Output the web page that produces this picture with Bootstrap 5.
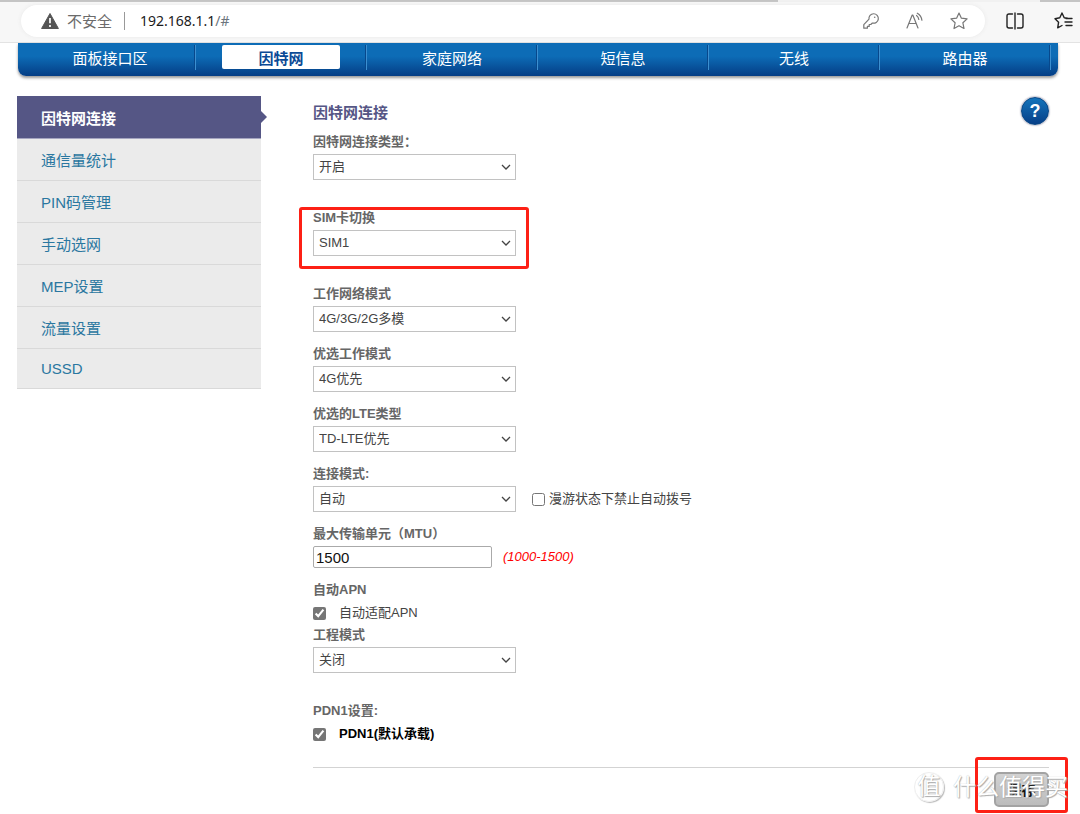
<!DOCTYPE html>
<html lang="zh-CN">
<head>
<meta charset="utf-8">
<meta name="viewport" content="width=device-width, initial-scale=1">
<title>因特网连接</title>
<link href="https://cdn.jsdelivr.net/npm/bootstrap@5.3.0/dist/css/bootstrap.min.css" rel="stylesheet">
<style>
  body { font-family: "Liberation Sans", "Noto Sans CJK SC", sans-serif; font-size: 13px; line-height: 20px; color: #444; background: #fff; }

  /* browser toolbar */
  .toolbar { height: 41px; background: #f7f7f7; border-bottom: 1px solid #e3e3e3; padding: 3px 7px 0 21px; }
  .tab-edge { height: 2px; background: #f1f1f1; }
  .tab-edge i { background: #c4c4c4; }
  .tab-edge .edge-left { width: 72%; }
  .tab-edge .edge-right { width: 40px; }
  .address { height: 32px; border-radius: 16px; background: #fff; box-shadow: 0 0 4px #e9e9e9; padding: 0 17px 0 20px; font: 15px/32px "Noto Sans", "Noto Sans CJK SC", sans-serif; color: #6b6b6b; }
  .address .url { font-size: 14px; color: #1b1b1b; outline: 0; }
  .address .divider { width: 1px; height: 18px; background: #999; margin: 0 15px 0 12px; }
  .address-tools { gap: 26px; }
  .window-tools { gap: 30px; height: 32px; margin-left: 21px; }
  .tool { border: 0; background: none; padding: 0; display: flex; color: #777; }
  .tool.dark { color: #222; }
  .tool svg { fill: none; stroke: currentColor; stroke-width: 1.2; stroke-linejoin: round; stroke-linecap: round; }

  /* main navigation */
  .main-nav { margin: 0 22px 0 18px; height: 33px; padding: 0 7px; border-radius: 0 0 8px 8px; background: linear-gradient(#0d6cb6 40%, #043d85); box-shadow: 0 2px 3px #999; }
  .main-nav .nav-item { height: 25px; margin-top: 2px; border-right: 1px solid #3c8fd0; box-shadow: inset -1px 0 #07488c; padding: 0 26px; }
  .main-nav .nav-link { padding: 0; color: #fff; font-size: 15px; line-height: 28px; height: 24px; border-radius: 2px; }
  .main-nav .nav-link.active { background: #fff; color: #0b4a96; font-weight: bold; }

  /* side menu */
  .page { padding: 20px 31px 7px 17px; gap: 52px; }
  .side { width: 244px; }
  .side .list-group-item { border: 0; border-bottom: 1px solid #d9d9d9; background: #ebebeb; color: #2a77a0; font-size: 15px; line-height: 23px; padding: 10px 24px 8px; }
  .side .list-group-item.active { background: #555685; color: #fff; font-weight: bold; margin: 0; border-color: #a5a5c0; padding-top: 11px; }
  .side .active::after { content: ""; position: absolute; left: 100%; top: 15px; border: 6px solid transparent; border-left-color: #555685; border-right: 0; }
  .side .list-group-item:last-child { padding: 8px 24px; border-bottom-width: 1px; }

  /* settings form */
  .title { font-size: 15px; line-height: 30px; font-weight: bold; color: #555685; margin: 2px 0 0; }
  .help { width: 28px; height: 28px; margin-top: 1px; border: 1px solid #084584; border-radius: 50%; background: linear-gradient(#1474bb, #073f88); color: #fff; font-size: 18px; font-weight: bold; line-height: 26px; box-shadow: 0 0 2px #557; }
  .caption { display: block; line-height: 21px; margin-bottom: 2px; font-weight: bold; color: #666; width: fit-content; }
  .pick { width: 203px; height: 26px; border: 1px solid #c2c2c2; border-radius: 0; padding: 0 24px 0 5px; font-size: 13px; line-height: 24px; color: #444;
    background-image: url("data:image/svg+xml,%3Csvg xmlns='http://www.w3.org/2000/svg' viewBox='0 0 10 6'%3E%3Cpath fill='none' stroke='%23444' stroke-width='1.3' d='M1 1l4 4 4-4'/%3E%3C/svg%3E"); background-size: 10px 6px; background-position: right 4px center; }
  form { margin-top: 3px; }
  .group { margin-bottom: 11px; width: fit-content; }
  .group.wide { margin-bottom: 27px; }
  .tick { width: 13px; height: 13px; margin: 0; accent-color: #767676; }
  .tick-row { height: 22px; gap: 13px; }
  .mtu { width: 179px; height: 22px; padding: 0 2px; border: 1px solid #aaa; border-radius: 2px; font-size: 15px; color: #111; }
  .range { color: #f00; font-style: italic; padding-left: 11px; }
  .actions { border-top: 1px solid #d3d3d3; padding-top: 4px; margin-top: 22px; }
  .save { width: 55px; height: 35px; border: 2px solid #a3a3a3; border-radius: 5px; background: linear-gradient(#d2d2d2, #bcbcbc); color: #111; font-size: 14px; font-weight: bold; padding: 0; }
  .marked::before { content: ""; position: absolute; inset: 0 -13px -13px -14px; border: 3px solid #fd2015; border-radius: 3px; pointer-events: none; }
  .marked.save-mark::before { inset: -15px -19px -6px; }
  .watermark { position: absolute; right: -19px; top: 0; gap: 9px; white-space: nowrap; pointer-events: none; color: #fff; font-size: 23px; line-height: 30px; text-shadow: 0 0 1px #aaa, 1px 1px 1px #aaa; }
  .watermark .seal { width: 30px; height: 30px; border-radius: 50%; border: 1px solid #eee; box-shadow: 1px 1px 1px #bbb; line-height: 27px; text-align: center; }
</style>
</head>
<body>
<div class="tab-edge d-flex justify-content-between"><i class="edge-left"></i><i class="edge-right"></i></div>
<header class="toolbar d-flex align-items-start">
  <div class="address d-flex align-items-center flex-grow-1">
    <svg width="18" height="16" viewBox="0 0 18 16" class="me-2"><path d="M9 .5 17.4 15.5H.6z" fill="#555" stroke="#555" stroke-linejoin="round"/><path d="M9 5v5.2M9 12v2" stroke="#fff" stroke-width="1.7"/></svg>
    <span>不安全</span>
    <span class="divider"></span>
    <div class="url flex-grow-1" role="textbox" aria-label="地址" contenteditable="true" spellcheck="false">192.168.1.1<span class="text-secondary">/#</span></div>
    <div class="address-tools d-flex align-items-center">
      <button class="tool" aria-label="密码"><svg width="18" height="18" viewBox="0 0 18 18"><path d="M7 7.2A4.7 4.7 0 1 1 10.4 11L8.8 12.5H7.2v1.9H5.4v1.8H1.8v-3.5z"/><circle cx="12.7" cy="5.2" r=".8" fill="currentColor" stroke="none"/></svg></button>
      <button class="tool" aria-label="朗读"><svg width="18" height="18" viewBox="0 0 18 18"><path d="M1 16 6.2 3h.6L12 16M2.8 11.5h7.4M10.5 3.5q2 1.4 2.3 4M11.3 1.2q4 2.2 4.6 7"/></svg></button>
      <button class="tool" aria-label="收藏"><svg width="18" height="18" viewBox="0 0 18 18"><path d="m9 1 2.4 5.2 5.7.7-4.2 3.9 1.1 5.7L9 13.7l-5 2.8 1.1-5.7L.9 6.9l5.7-.7z"/></svg></button>
    </div>
  </div>
  <div class="window-tools d-flex align-items-center">
    <button class="tool dark" aria-label="分屏"><svg width="18" height="18" viewBox="0 0 18 18"><path stroke-width="1.4" d="M6.5 2H3Q1 2 1 4v10q0 2 2 2h3.5M11.5 2H15q2 0 2 2v10q0 2-2 2h-3.5M9 1v16"/></svg></button>
    <button class="tool dark" aria-label="收藏夹"><svg width="19" height="18" viewBox="0 0 19 18"><path stroke-width="1.4" d="m13.5 6.2-3.3-.4L8 1 5.8 5.8 1 6.7l3.6 3.5-.9 5.6L8 13.5M12 6.5h6M11 10h7M12 13.5h6"/></svg></button>
  </div>
</header>

<nav class="main-nav">
  <ul class="nav nav-fill flex-nowrap">
    <li class="nav-item w-100"><a class="nav-link" href="#">面板接口区</a></li>
    <li class="nav-item w-100"><a class="nav-link active" href="#">因特网</a></li>
    <li class="nav-item w-100"><a class="nav-link" href="#">家庭网络</a></li>
    <li class="nav-item w-100"><a class="nav-link" href="#">短信息</a></li>
    <li class="nav-item w-100"><a class="nav-link" href="#">无线</a></li>
    <li class="nav-item w-100"><a class="nav-link" href="#">路由器</a></li>
  </ul>
</nav>

<div class="page d-flex align-items-start">
  <aside class="side list-group list-group-flush flex-shrink-0">
    <a class="list-group-item active" href="#">因特网连接</a>
    <a class="list-group-item" href="#">通信量统计</a>
    <a class="list-group-item" href="#">PIN码管理</a>
    <a class="list-group-item" href="#">手动选网</a>
    <a class="list-group-item" href="#">MEP设置</a>
    <a class="list-group-item" href="#">流量设置</a>
    <a class="list-group-item" href="#">USSD</a>
  </aside>

  <main class="flex-grow-1">
    <div class="d-flex justify-content-between align-items-start">
      <h1 class="title">因特网连接</h1>
      <button class="help p-0" aria-label="帮助">?</button>
    </div>
    <form>
      <div class="group wide">
        <label class="caption" for="type">因特网连接类型：</label>
        <select class="form-select pick" id="type"><option>开启</option></select>
      </div>
      <div class="group wide position-relative marked">
        <label class="caption" for="sim">SIM卡切换</label>
        <select class="form-select pick" id="sim"><option>SIM1</option></select>
      </div>
      <div class="group">
        <label class="caption" for="net">工作网络模式</label>
        <select class="form-select pick" id="net"><option>4G/3G/2G多模</option></select>
      </div>
      <div class="group">
        <label class="caption" for="prefer">优选工作模式</label>
        <select class="form-select pick" id="prefer"><option>4G优先</option></select>
      </div>
      <div class="group">
        <label class="caption" for="lte">优选的LTE类型</label>
        <select class="form-select pick" id="lte"><option>TD-LTE优先</option></select>
      </div>
      <div class="group">
        <label class="caption" for="mode">连接模式:</label>
        <div class="d-flex align-items-center">
          <select class="form-select pick" id="mode"><option>自动</option></select>
          <input class="tick ms-3 me-1" type="checkbox" id="roam"><label for="roam">漫游状态下禁止自动拨号</label>
        </div>
      </div>
      <div class="group">
        <label class="caption" for="mtu">最大传输单元（MTU）</label>
        <div class="d-flex align-items-center">
          <input class="mtu" type="text" id="mtu" value="1500"><span class="range">(1000-1500)</span>
        </div>
      </div>
      <div>
        <span class="caption">自动APN</span>
        <div class="tick-row d-flex align-items-center">
          <input class="tick" type="checkbox" id="apn" checked><label for="apn">自动适配APN</label>
        </div>
      </div>
      <div class="group wide">
        <label class="caption" for="eng">工程模式</label>
        <select class="form-select pick" id="eng"><option>关闭</option></select>
      </div>
      <div>
        <span class="caption">PDN1设置:</span>
        <div class="tick-row d-flex align-items-center">
          <input class="tick" type="checkbox" id="pdn" checked><label class="fw-bold text-black" for="pdn">PDN1(默认承载)</label>
        </div>
      </div>
      <div class="actions d-flex justify-content-end">
        <div class="position-relative marked save-mark">
          <button class="save d-block" type="button">保存</button>
          <div class="watermark d-flex"><span class="seal">值</span><span>什么值得买</span></div>
        </div>
      </div>
    </form>
  </main>
</div>
<script src="https://cdn.jsdelivr.net/npm/bootstrap@5.3.0/dist/js/bootstrap.bundle.min.js"></script>
</body>
</html>
